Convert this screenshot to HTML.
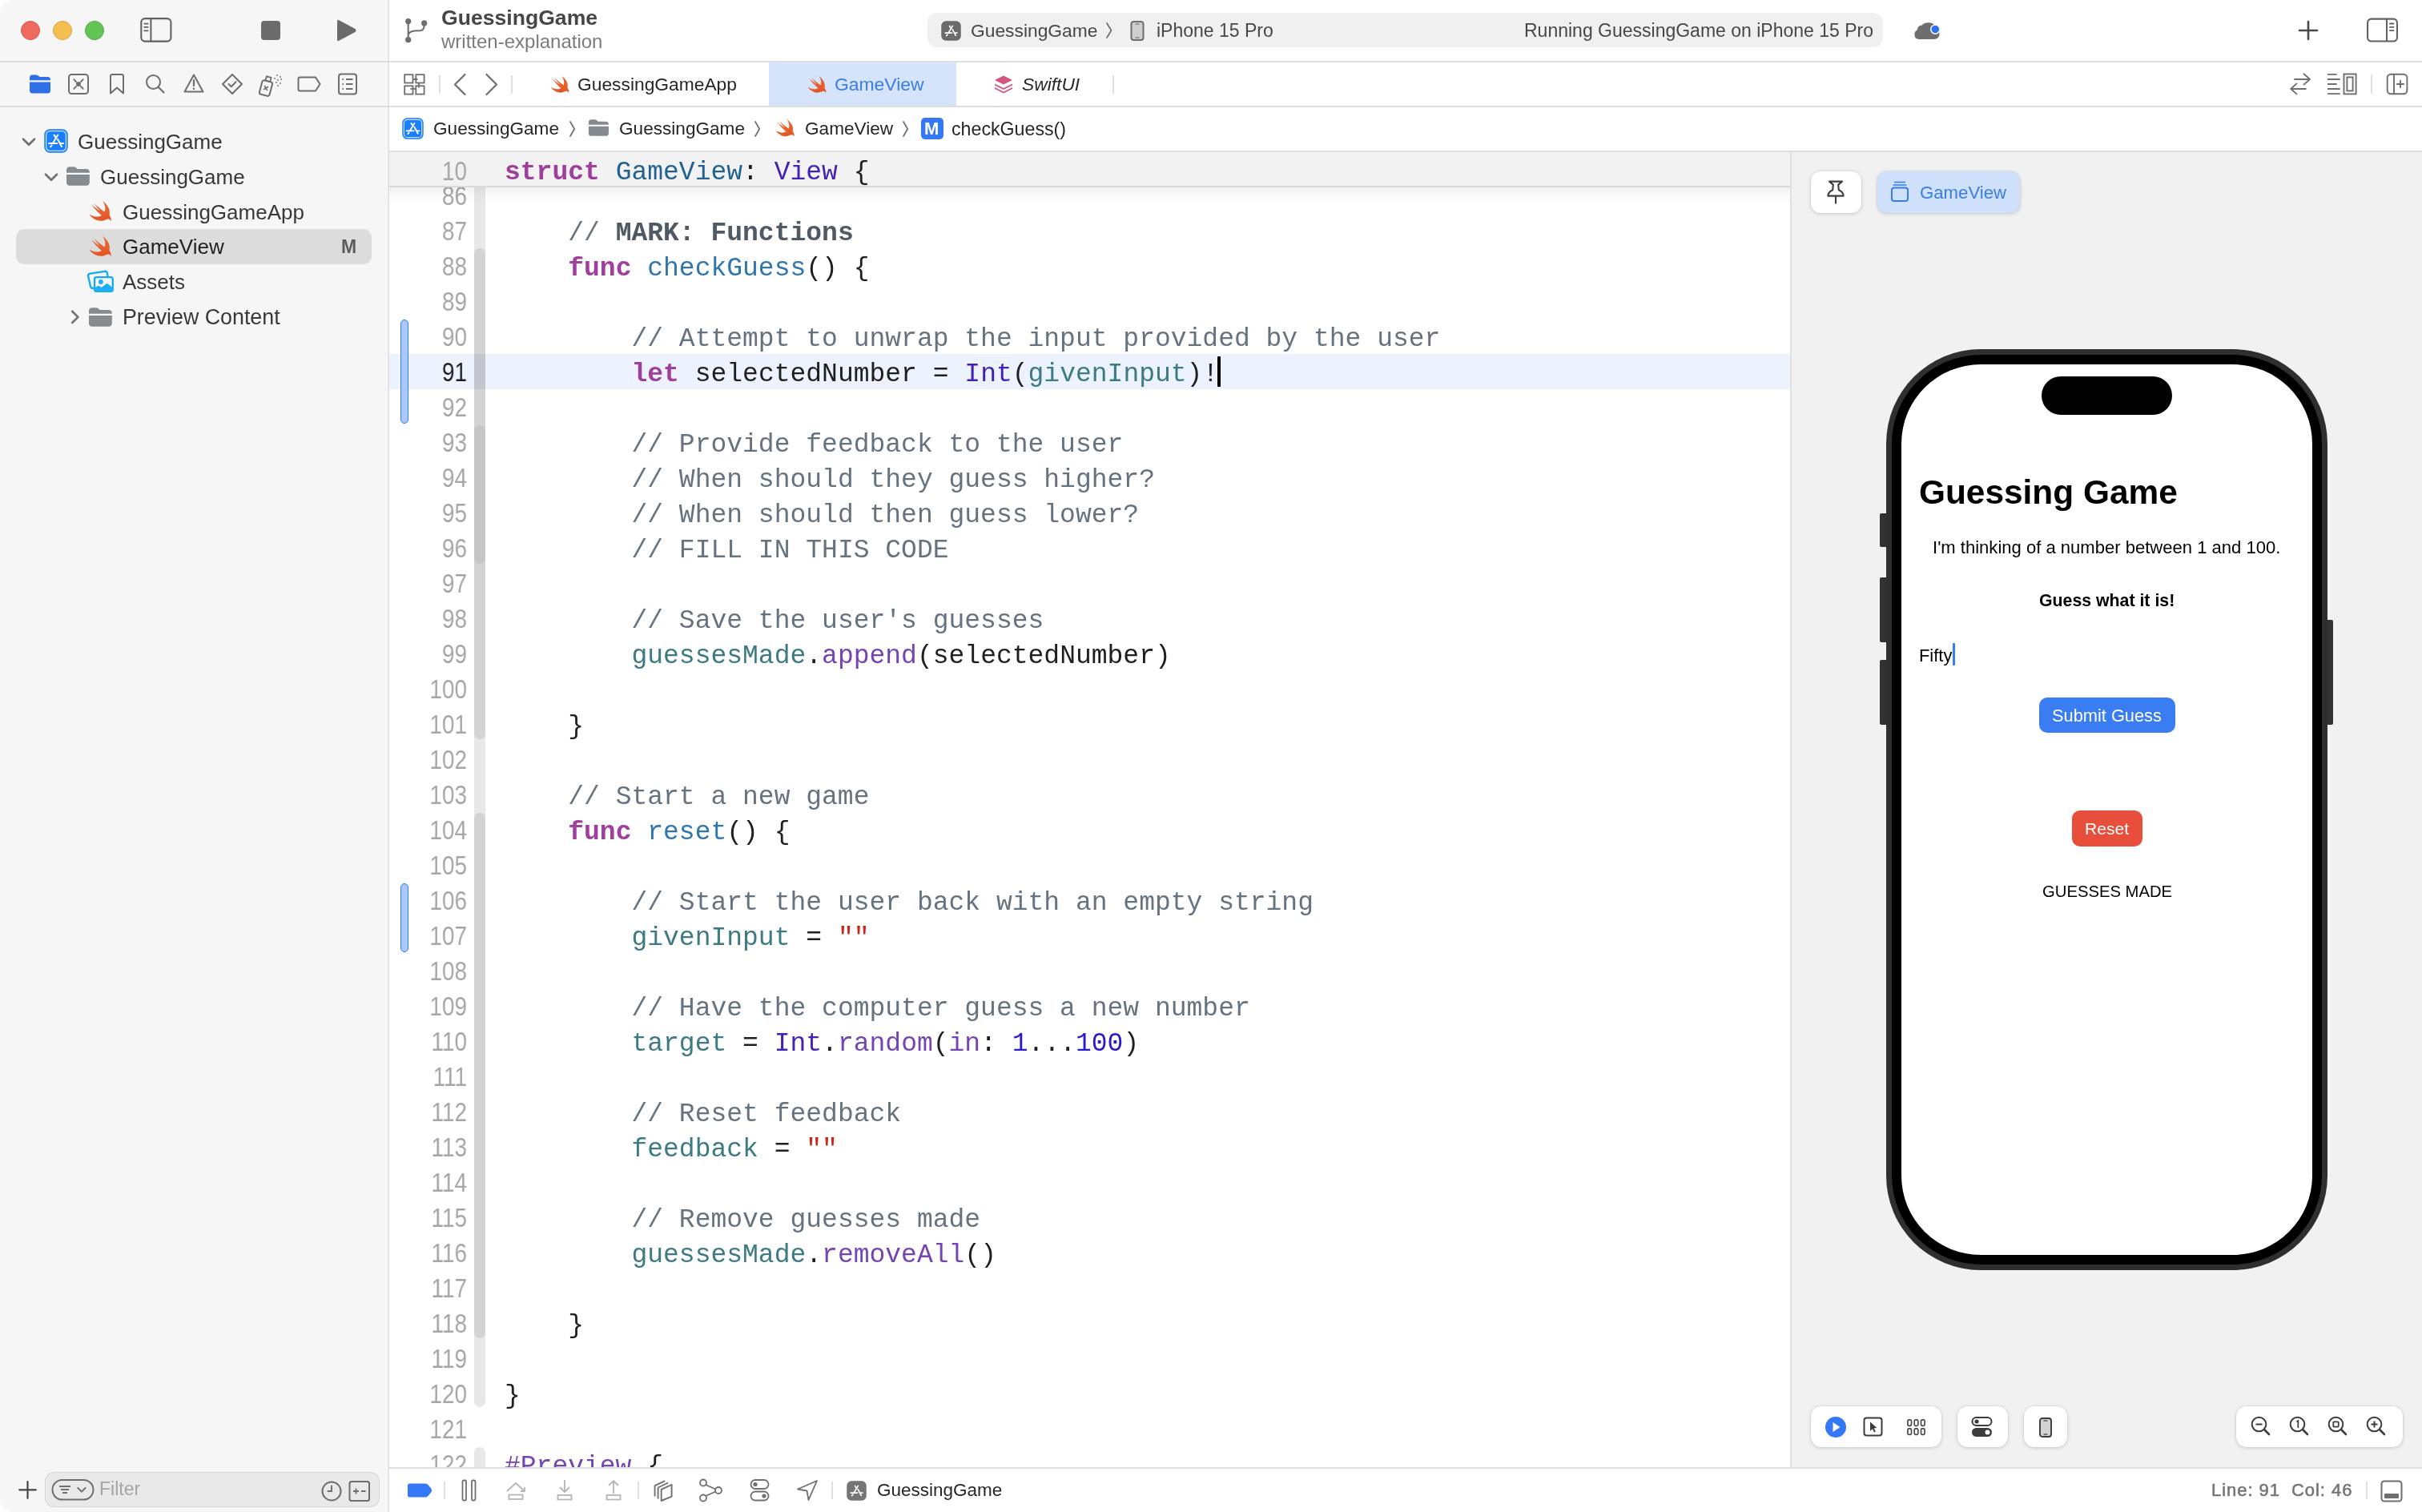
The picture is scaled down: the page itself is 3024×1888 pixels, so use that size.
<!DOCTYPE html>
<html><head><meta charset="utf-8"><style>
html,body{margin:0;padding:0;width:3024px;height:1888px;overflow:hidden;background:#fff;font-family:"Liberation Sans", sans-serif}
.t{position:absolute;white-space:pre;will-change:transform;}
svg{overflow:visible}
</style></head><body>
<div style="position:absolute;left:0px;top:0px;width:486px;height:1888px;background:#f6f6f6;border-radius:16px 0 0 16px"></div>
<div style="position:absolute;left:485px;top:0px;width:1px;height:1888px;background:#dcdcdc;"></div>
<div style="position:absolute;left:484px;top:0px;width:1px;height:1888px;background:#ededed;"></div>
<div style="position:absolute;left:26px;top:26px;width:22px;height:22px;border-radius:50%;background:#ee6a5f;border:1px solid #d8574d"></div>
<div style="position:absolute;left:66px;top:26px;width:22px;height:22px;border-radius:50%;background:#f5bf4f;border:1px solid #dba43c"></div>
<div style="position:absolute;left:106px;top:26px;width:22px;height:22px;border-radius:50%;background:#61c454;border:1px solid #4fa843"></div>
<svg style="position:absolute;left:173px;top:20px;" width="42" height="34" viewBox="0 0 42 34"><rect x="3.3" y="3.1" width="37.1" height="28.5" rx="4.8" fill="none" stroke="#616161" stroke-width="2.1"/><line x1="15.4" y1="3" x2="15.4" y2="31.6" stroke="#616161" stroke-width="2"/><path d="M7.2 9.6H11.6M7.2 13.9H11.6M7.2 18.3H11.6" stroke="#616161" stroke-width="1.8" stroke-linecap="round"/></svg>
<div style="position:absolute;left:326px;top:26px;width:24px;height:24px;background:#6b6b6b;border-radius:4px"></div>
<svg style="position:absolute;left:417px;top:22px;" width="30" height="32" viewBox="0 0 30 32"><path d="M4 4.5 Q4 2 6.3 3.2 L26.5 14 Q28.5 16 26.5 18 L6.3 28.8 Q4 30 4 27.5 Z" fill="#6b6b6b"/></svg>
<div style="position:absolute;left:0px;top:76px;width:486px;height:2px;background:#dcdcdc;"></div>
<div style="position:absolute;left:0px;top:132px;width:486px;height:2px;background:#dcdcdc;"></div>
<svg style="position:absolute;left:35px;top:92px;" width="30" height="26" viewBox="0 0 30 26"><path d="M2 5 Q2 1.5 5.5 1.5 H10 Q12 1.5 13.5 3 L14.5 4 H24.5 Q28 4 28 7.5 V8.2 H2 Z" fill="#2f6fe8"/><path d="M2 10.5 H28 V21 Q28 24.5 24.5 24.5 H5.5 Q2 24.5 2 21 Z" fill="#2f6fe8"/></svg>
<svg style="position:absolute;left:83px;top:90px;" width="30" height="30" viewBox="0 0 30 30"><rect x="3" y="3" width="24" height="24" rx="3.5" fill="none" stroke="#6e6e6e" stroke-width="2"/><circle cx="15" cy="15" r="3" fill="#6e6e6e"/><path d="M9.2 9.2 L12 12 M20.8 9.2 L18 12 M9.2 20.8 L12 18 M20.8 20.8 L18 18" stroke="#6e6e6e" stroke-width="1.8" stroke-linecap="round"/></svg>
<svg style="position:absolute;left:134px;top:90px;" width="24" height="30" viewBox="0 0 24 30"><path d="M4 26.5 V5 Q4 3 6 3 H18 Q20 3 20 5 V26.5 L12 19.5 Z" fill="none" stroke="#6e6e6e" stroke-width="2" stroke-linejoin="round"/></svg>
<svg style="position:absolute;left:180px;top:91px;" width="28" height="28" viewBox="0 0 28 28"><circle cx="11.5" cy="11.5" r="8.5" fill="none" stroke="#6e6e6e" stroke-width="2"/><line x1="17.8" y1="17.8" x2="24.5" y2="24.5" stroke="#6e6e6e" stroke-width="2.2" stroke-linecap="round"/></svg>
<svg style="position:absolute;left:228px;top:90px;" width="28" height="28" viewBox="0 0 28 28"><path d="M14 3.5 L25.5 24.5 H2.5 Z" fill="none" stroke="#6e6e6e" stroke-width="2" stroke-linejoin="round"/><line x1="14" y1="10" x2="14" y2="17" stroke="#6e6e6e" stroke-width="2.2" stroke-linecap="round"/><circle cx="14" cy="20.8" r="1.3" fill="#6e6e6e"/></svg>
<svg style="position:absolute;left:275px;top:90px;" width="30" height="30" viewBox="0 0 30 30"><path d="M15 3 L27 15 L15 27 L3 15 Z" fill="none" stroke="#6e6e6e" stroke-width="2" stroke-linejoin="round"/><path d="M10.5 15 L13.8 18.2 L19.5 12.3" fill="none" stroke="#6e6e6e" stroke-width="2" stroke-linecap="round" stroke-linejoin="round"/></svg>
<svg style="position:absolute;left:321px;top:90px;" width="36" height="32" viewBox="0 0 36 32"><g transform="rotate(15 11 18)"><rect x="5" y="11" width="13" height="18" rx="2.5" fill="none" stroke="#6e6e6e" stroke-width="2"/><rect x="8.5" y="5.5" width="6" height="5.5" fill="none" stroke="#6e6e6e" stroke-width="1.8"/><path d="M9 17.5 L14 22.5 M14 17.5 L9 22.5" stroke="#6e6e6e" stroke-width="1.6"/></g><g fill="#6e6e6e"><circle cx="25" cy="4" r="0.9"/><circle cx="29" cy="6" r="0.9"/><circle cx="22" cy="8" r="0.9"/><circle cx="26" cy="10" r="0.9"/><circle cx="30" cy="9" r="0.9"/><circle cx="24" cy="13" r="0.9"/><circle cx="29" cy="14" r="0.9"/><circle cx="26" cy="17" r="0.9"/></g></svg>
<svg style="position:absolute;left:369px;top:94px;" width="34" height="22" viewBox="0 0 34 22"><path d="M3.5 4.5 Q3.5 2.5 5.5 2.5 H25 L30.5 11 L25 19.5 H5.5 Q3.5 19.5 3.5 17.5 Z" fill="none" stroke="#6e6e6e" stroke-width="2" stroke-linejoin="round"/></svg>
<svg style="position:absolute;left:421px;top:90px;" width="26" height="30" viewBox="0 0 26 30"><rect x="2" y="2.5" width="22" height="25" rx="3" fill="none" stroke="#6e6e6e" stroke-width="2"/><path d="M6.5 9H8M11 9H19.5M6.5 15H8M11 15H19.5M6.5 21H8M11 21H19.5" stroke="#6e6e6e" stroke-width="1.8"/></svg>
<svg style="position:absolute;left:26px;top:169.5px;" width="20" height="16" viewBox="0 0 20 16"><path d="M3 3.8 L10 10.8 L17 3.8" fill="none" stroke="#737373" stroke-width="2.8" stroke-linecap="round" stroke-linejoin="round"/></svg>
<svg style="position:absolute;left:54.6px;top:161px;" width="30" height="30" viewBox="0 0 30 30"><rect x="0.3" y="0.3" width="29.4" height="29.4" rx="7" fill="#1b7ffb"/><rect x="2.6" y="2.6" width="24.8" height="24.8" rx="5" fill="none" stroke="#ffffff" stroke-opacity="0.75" stroke-width="1.3"/><path d="M12.6 7.6 L14.6 10.8 M17.2 7.6 L10.9 18.1 M16.9 12.8 L22 22 M6.2 18.1 H16.2 M20.5 18.1 H24 M9.5 20.6 L8 22.3" stroke="#ffffff" stroke-width="2" stroke-linecap="round" fill="none"/></svg>
<div class="t" style="left:97.0px;top:163.9px;font:normal 400 26px/1 'Liberation Sans', sans-serif;color:#383838;">GuessingGame</div>
<svg style="position:absolute;left:54px;top:213.5px;" width="20" height="16" viewBox="0 0 20 16"><path d="M3 3.8 L10 10.8 L17 3.8" fill="none" stroke="#737373" stroke-width="2.8" stroke-linecap="round" stroke-linejoin="round"/></svg>
<svg style="position:absolute;left:82px;top:208px;" width="31" height="25" viewBox="0 0 31 25"><path d="M1 4.6 Q1 0.3 5.3 0.3 H9.6 Q11.6 0.3 13.1 1.6 L14.6 3 H25.6 Q29.8 3 29.8 7.2 V7.7 H1 Z" fill="#868b90"/><path d="M1 10 H29.8 V19.6 Q29.8 23.8 25.6 23.8 H5.2 Q1 23.8 1 19.6 Z" fill="#868b90"/></svg>
<div class="t" style="left:125.0px;top:207.9px;font:normal 400 26px/1 'Liberation Sans', sans-serif;color:#383838;">GuessingGame</div>
<svg style="position:absolute;left:109px;top:251px;" width="30" height="26" viewBox="0.9 3.3 19.8 16.9"><defs><linearGradient id="sg" x1="0" y1="0" x2="0" y2="1"><stop offset="0" stop-color="#eb6a36"/><stop offset="1" stop-color="#e35626"/></linearGradient></defs><path d="M13.543 3.41c4.114 2.47 6.545 7.162 5.549 11.131-.024.093-.05.181-.076.272l.002.001c2.062 2.538 1.5 5.258 1.236 4.745-1.072-2.086-3.066-1.568-4.088-1.043a6.803 6.803 0 0 1-.281.158l-.02.012-.002.002c-2.115 1.123-4.957 1.205-7.812-.022a12.568 12.568 0 0 1-5.64-4.838c.649.48 1.35.902 2.097 1.252 3.019 1.414 6.051 1.311 8.197-.002C9.651 12.73 7.101 9.67 5.146 7.191a10.628 10.628 0 0 1-1.005-1.384c2.34 2.142 6.038 4.83 7.365 5.576C8.69 8.408 6.208 4.743 6.324 4.86c4.436 4.47 8.528 6.996 8.528 6.996.154.085.27.154.36.213.085-.215.16-.437.224-.668.708-2.588-.09-5.548-1.893-7.992z" fill="url(#sg)"/></svg>
<div class="t" style="left:153.0px;top:251.9px;font:normal 400 26px/1 'Liberation Sans', sans-serif;color:#383838;">GuessingGameApp</div>
<div style="position:absolute;left:20px;top:286px;width:444px;height:44px;background:#dcdcdc;border-radius:10px"></div>
<svg style="position:absolute;left:109px;top:295px;" width="30" height="26" viewBox="0.9 3.3 19.8 16.9"><defs><linearGradient id="sg" x1="0" y1="0" x2="0" y2="1"><stop offset="0" stop-color="#eb6a36"/><stop offset="1" stop-color="#e35626"/></linearGradient></defs><path d="M13.543 3.41c4.114 2.47 6.545 7.162 5.549 11.131-.024.093-.05.181-.076.272l.002.001c2.062 2.538 1.5 5.258 1.236 4.745-1.072-2.086-3.066-1.568-4.088-1.043a6.803 6.803 0 0 1-.281.158l-.02.012-.002.002c-2.115 1.123-4.957 1.205-7.812-.022a12.568 12.568 0 0 1-5.64-4.838c.649.48 1.35.902 2.097 1.252 3.019 1.414 6.051 1.311 8.197-.002C9.651 12.73 7.101 9.67 5.146 7.191a10.628 10.628 0 0 1-1.005-1.384c2.34 2.142 6.038 4.83 7.365 5.576C8.69 8.408 6.208 4.743 6.324 4.86c4.436 4.47 8.528 6.996 8.528 6.996.154.085.27.154.36.213.085-.215.16-.437.224-.668.708-2.588-.09-5.548-1.893-7.992z" fill="url(#sg)"/></svg>
<div class="t" style="left:153.0px;top:295.4px;font:normal 400 26px/1 'Liberation Sans', sans-serif;color:#1f1f1f;">GameView</div>
<div class="t" style="left:425.5px;top:297.1px;font:normal 700 23px/1 'Liberation Sans', sans-serif;color:#5c5c5c;">M</div>
<svg style="position:absolute;left:108px;top:337px;" width="36" height="30" viewBox="0 0 36 30"><path d="M8.5 23 Q5.3 23 4.9 20.3 L2.1 7.8 Q1.7 5.1 4.5 4.6 L22.8 1.8 Q25.6 1.4 26 4.2 L26.5 8" fill="none" stroke="#12a9f5" stroke-width="2.3" stroke-linecap="round"/><rect x="10.05" y="9.15" width="22.7" height="17.6" rx="2.6" fill="none" stroke="#12a9f5" stroke-width="2.3"/><circle cx="17.9" cy="15" r="2.9" fill="#1eaff6"/><path d="M9.6 22.6 L14.6 19.9 Q15.3 19.5 15.9 19.9 L18.6 21.9 L25.1 17.1 Q25.8 16.7 26.5 17.2 L33.2 22.6 V26.5 Q33.2 27.6 31.8 27.6 H11 Q9.6 27.6 9.6 26.2 Z" fill="#1eaff6"/></svg>
<div class="t" style="left:153.0px;top:338.9px;font:normal 400 26px/1 'Liberation Sans', sans-serif;color:#383838;">Assets</div>
<svg style="position:absolute;left:86px;top:386px;" width="16" height="22" viewBox="0 0 16 22"><path d="M4.2 2.8 L11.4 9.9 L4.2 17" fill="none" stroke="#737373" stroke-width="2.7" stroke-linecap="round" stroke-linejoin="round"/></svg>
<svg style="position:absolute;left:110px;top:384px;" width="31" height="25" viewBox="0 0 31 25"><path d="M1 4.6 Q1 0.3 5.3 0.3 H9.6 Q11.6 0.3 13.1 1.6 L14.6 3 H25.6 Q29.8 3 29.8 7.2 V7.7 H1 Z" fill="#868b90"/><path d="M1 10 H29.8 V19.6 Q29.8 23.8 25.6 23.8 H5.2 Q1 23.8 1 19.6 Z" fill="#868b90"/></svg>
<div class="t" style="left:153.0px;top:383.0px;font:normal 400 26.8px/1 'Liberation Sans', sans-serif;color:#383838;">Preview Content</div>
<svg style="position:absolute;left:22px;top:1848px;" width="26" height="26" viewBox="0 0 26 26"><path d="M12.5 2V22.8M2.2 12.3H22.8" stroke="#444" stroke-width="2.2" stroke-linecap="round"/></svg>
<div style="position:absolute;left:56px;top:1838px;width:418px;height:44px;background:#e9e9e9;border-radius:12px;box-shadow:inset 0 0 0 1px #d6d6d6"></div>
<svg style="position:absolute;left:63px;top:1846px;" width="56" height="30" viewBox="0 0 56 30"><rect x="2.5" y="2" width="51" height="24.5" rx="12.2" fill="none" stroke="#6e6e6e" stroke-width="2"/><path d="M11 10H25M13 14H23M15 18H21" stroke="#6e6e6e" stroke-width="1.9"/><path d="M34.3 12 L38.9 16.6 L43.6 12" fill="none" stroke="#6e6e6e" stroke-width="2" stroke-linecap="round" stroke-linejoin="round"/></svg>
<div class="t" style="left:124.0px;top:1848.0px;font:normal 400 23px/1 'Liberation Sans', sans-serif;color:#a5a5a5;">Filter</div>
<svg style="position:absolute;left:399px;top:1847px;" width="32" height="30" viewBox="0 0 32 30"><circle cx="15" cy="15" r="11.5" fill="none" stroke="#6e6e6e" stroke-width="2"/><path d="M15 8.5V15H10.5" fill="none" stroke="#6e6e6e" stroke-width="2" stroke-linecap="round"/></svg>
<svg style="position:absolute;left:434px;top:1847px;" width="30" height="30" viewBox="0 0 30 30"><rect x="2.5" y="3" width="24.5" height="24" rx="2.5" fill="none" stroke="#6e6e6e" stroke-width="2"/><path d="M7 15H14M10.5 11.5V18.5M17 15H22.5" stroke="#6e6e6e" stroke-width="1.8"/></svg>
<div style="position:absolute;left:486px;top:0px;width:2538px;height:76px;background:#ffffff;"></div>
<svg style="position:absolute;left:495px;top:15px;" width="50" height="50" viewBox="0 0 50 50"><circle cx="14.7" cy="11.6" r="3.6" fill="#6e6e6e"/><circle cx="14.7" cy="34.7" r="3.6" fill="#6e6e6e"/><circle cx="34.7" cy="13.9" r="3.6" fill="#6e6e6e"/><path d="M14.7 11.6 V34.7 M14.7 29 Q15.5 24 23 23.5 L30 23.2 Q34.5 23 34.7 16" fill="none" stroke="#6e6e6e" stroke-width="2.1"/></svg>
<div class="t" style="left:551.0px;top:9.4px;font:normal 700 26.6px/1 'Liberation Sans', sans-serif;color:#464646;">GuessingGame</div>
<div class="t" style="left:551.0px;top:39.6px;font:normal 400 24px/1 'Liberation Sans', sans-serif;color:#7b7b7b;">written-explanation</div>
<div style="position:absolute;left:1158px;top:16px;width:1193px;height:43px;background:#f0f0f0;border-radius:12px"></div>
<svg style="position:absolute;left:1175px;top:26px;" width="25" height="25" viewBox="0 0 30 30"><rect x="0.3" y="0.3" width="29.4" height="29.4" rx="7" fill="#6b6b6b"/><path d="M12.6 7.6 L14.6 10.8 M17.2 7.6 L10.9 18.1 M16.9 12.8 L22 22 M6.2 18.1 H16.2 M20.5 18.1 H24 M9.5 20.6 L8 22.3" stroke="#ffffff" stroke-width="2" stroke-linecap="round" fill="none"/></svg>
<div class="t" style="left:1212.0px;top:26.8px;font:normal 400 22.8px/1 'Liberation Sans', sans-serif;color:#474747;">GuessingGame</div>
<svg style="position:absolute;left:1379px;top:27px;" width="14" height="22" viewBox="0 0 14 22"><path d="M3 2 L8.5 11 L3 20" fill="none" stroke="#6e6e6e" stroke-width="1.7" stroke-linecap="round" stroke-linejoin="round"/></svg>
<svg style="position:absolute;left:1410px;top:25px;" width="20" height="27" viewBox="0 0 20 27"><rect x="2.5" y="2" width="15" height="23" rx="3" fill="#cfcfcf" stroke="#6e6e6e" stroke-width="2"/><line x1="7.5" y1="5" x2="12.5" y2="5" stroke="#6e6e6e" stroke-width="1.2"/><line x1="7.5" y1="22" x2="12.5" y2="22" stroke="#6e6e6e" stroke-width="1.2"/></svg>
<div class="t" style="left:1444.0px;top:26.7px;font:normal 400 23px/1 'Liberation Sans', sans-serif;color:#474747;">iPhone 15 Pro</div>
<div class="t" style="left:1902.5px;top:26.7px;font:normal 400 23px/1 'Liberation Sans', sans-serif;color:#474747;">Running GuessingGame on iPhone 15 Pro</div>
<svg style="position:absolute;left:2388px;top:24px;" width="38" height="30" viewBox="0 0 38 30"><path d="M8 24.9 Q2.4 24.9 2.4 19 Q2.4 14.8 6 13.2 Q6.2 7.6 11.6 7.4 Q14.6 4.2 19.6 4.2 Q25.5 4.2 28.5 8.5 Q33.5 11.5 33.5 18 Q33.5 24.9 26.5 24.9 Z" fill="#6e6e6e"/><circle cx="28.3" cy="12.6" r="6.3" fill="#ffffff"/><circle cx="28.3" cy="12.6" r="4.8" fill="#2f6ff0"/></svg>
<svg style="position:absolute;left:2868px;top:24px;" width="28" height="28" viewBox="0 0 28 28"><path d="M14 3V25M3 14H25" stroke="#4a4a4a" stroke-width="2.6" stroke-linecap="round"/></svg>
<svg style="position:absolute;left:2953px;top:21px;" width="42" height="33" viewBox="0 0 42 33"><rect x="3.05" y="2.65" width="36.9" height="27.9" rx="4.8" fill="none" stroke="#616161" stroke-width="2.1"/><line x1="27" y1="2.6" x2="27" y2="30.6" stroke="#616161" stroke-width="2"/><path d="M30.9 8.5H35.5M30.9 12.9H35.5M30.9 17.2H35.5" stroke="#616161" stroke-width="1.8" stroke-linecap="round"/></svg>
<div style="position:absolute;left:486px;top:76px;width:2538px;height:2px;background:#dedede;"></div>
<div style="position:absolute;left:486px;top:78px;width:2538px;height:54px;background:#ffffff;"></div>
<div style="position:absolute;left:486px;top:132px;width:2538px;height:2px;background:#dedede;"></div>
<svg style="position:absolute;left:498px;top:86px;" width="40" height="40" viewBox="0 0 40 40"><g fill="none" stroke="#6e6e6e" stroke-width="1.8"><rect x="7.2" y="7.2" width="10.3" height="10.3"/><rect x="21.3" y="7.2" width="10.3" height="10.3"/><rect x="7.2" y="21.3" width="10.3" height="10.3"/><rect x="21.3" y="21.3" width="10.3" height="10.3"/><path d="M17.5 13 H23.5 M25 17.5 V23.5 M14.3 24.9 H21.3"/></g></svg>
<div style="position:absolute;left:548px;top:94px;width:2px;height:23px;background:#e0e0e0;"></div>
<svg style="position:absolute;left:562px;top:90px;" width="24" height="32" viewBox="0 0 24 32"><path d="M18.5 3 L6 15.5 L18.5 28" fill="none" stroke="#6e6e6e" stroke-width="2.2" stroke-linecap="round" stroke-linejoin="round"/></svg>
<svg style="position:absolute;left:602px;top:90px;" width="24" height="32" viewBox="0 0 24 32"><path d="M5.5 3 L18 15.5 L5.5 28" fill="none" stroke="#6e6e6e" stroke-width="2.2" stroke-linecap="round" stroke-linejoin="round"/></svg>
<div style="position:absolute;left:638px;top:94px;width:2px;height:23px;background:#e0e0e0;"></div>
<svg style="position:absolute;left:684.5px;top:94.5px;" width="26" height="21.5" viewBox="0.9 3.3 19.8 16.9"><defs><linearGradient id="sg" x1="0" y1="0" x2="0" y2="1"><stop offset="0" stop-color="#eb6a36"/><stop offset="1" stop-color="#e35626"/></linearGradient></defs><path d="M13.543 3.41c4.114 2.47 6.545 7.162 5.549 11.131-.024.093-.05.181-.076.272l.002.001c2.062 2.538 1.5 5.258 1.236 4.745-1.072-2.086-3.066-1.568-4.088-1.043a6.803 6.803 0 0 1-.281.158l-.02.012-.002.002c-2.115 1.123-4.957 1.205-7.812-.022a12.568 12.568 0 0 1-5.64-4.838c.649.48 1.35.902 2.097 1.252 3.019 1.414 6.051 1.311 8.197-.002C9.651 12.73 7.101 9.67 5.146 7.191a10.628 10.628 0 0 1-1.005-1.384c2.34 2.142 6.038 4.83 7.365 5.576C8.69 8.408 6.208 4.743 6.324 4.86c4.436 4.47 8.528 6.996 8.528 6.996.154.085.27.154.36.213.085-.215.16-.437.224-.668.708-2.588-.09-5.548-1.893-7.992z" fill="url(#sg)"/></svg>
<div class="t" style="left:721.0px;top:93.8px;font:normal 400 22.8px/1 'Liberation Sans', sans-serif;color:#262626;">GuessingGameApp</div>
<div style="position:absolute;left:960px;top:78px;width:234px;height:54px;background:#d5e4fb;"></div>
<svg style="position:absolute;left:1006px;top:94.5px;" width="26" height="21.5" viewBox="0.9 3.3 19.8 16.9"><defs><linearGradient id="sg" x1="0" y1="0" x2="0" y2="1"><stop offset="0" stop-color="#eb6a36"/><stop offset="1" stop-color="#e35626"/></linearGradient></defs><path d="M13.543 3.41c4.114 2.47 6.545 7.162 5.549 11.131-.024.093-.05.181-.076.272l.002.001c2.062 2.538 1.5 5.258 1.236 4.745-1.072-2.086-3.066-1.568-4.088-1.043a6.803 6.803 0 0 1-.281.158l-.02.012-.002.002c-2.115 1.123-4.957 1.205-7.812-.022a12.568 12.568 0 0 1-5.64-4.838c.649.48 1.35.902 2.097 1.252 3.019 1.414 6.051 1.311 8.197-.002C9.651 12.73 7.101 9.67 5.146 7.191a10.628 10.628 0 0 1-1.005-1.384c2.34 2.142 6.038 4.83 7.365 5.576C8.69 8.408 6.208 4.743 6.324 4.86c4.436 4.47 8.528 6.996 8.528 6.996.154.085.27.154.36.213.085-.215.16-.437.224-.668.708-2.588-.09-5.548-1.893-7.992z" fill="url(#sg)"/></svg>
<div class="t" style="left:1042.0px;top:93.7px;font:normal 400 22.9px/1 'Liberation Sans', sans-serif;color:#3a7de6;">GameView</div>
<svg style="position:absolute;left:1239px;top:92px;" width="28" height="26" viewBox="0 0 28 26"><path d="M14 2.5 L25 8 L14 13.5 L3 8 Z" fill="#d4557f"/><path d="M3 12.5 L14 18 L25 12.5 V14.5 L14 20 L3 14.5 Z" fill="#d4557f"/><path d="M3 17 L14 22.5 L25 17 V19 L14 24.5 L3 19 Z" fill="#d4557f"/></svg>
<div class="t" style="left:1276.0px;top:93.8px;font:italic 400 22.8px/1 'Liberation Sans', sans-serif;color:#262626;">SwiftUI</div>
<div style="position:absolute;left:1389px;top:94px;width:2px;height:23px;background:#e0e0e0;"></div>
<svg style="position:absolute;left:2850px;top:85px;" width="170" height="40" viewBox="0 0 170 40"><g fill="none" stroke="#6e6e6e" stroke-width="1.9" stroke-linecap="round" stroke-linejoin="round"><path d="M15 14 H34 M26.5 7.2 L34 14 L26.5 20.6 M28.8 26 H10.2 M17.5 19.4 L10.2 26 L17.5 32.4"/></g><g stroke="#6e6e6e" stroke-width="1.9"><path d="M56 7.9H67.7M56 14H71.7M56 20H67.7M56 26H71.7M56 32.1H71.7"/><rect x="76.5" y="7.5" width="15.1" height="24.9" fill="none"/><rect x="80.4" y="11.4" width="7.2" height="17" fill="none"/></g></svg>
<div style="position:absolute;left:2960px;top:93px;width:2px;height:24px;background:#e0e0e0;"></div>
<svg style="position:absolute;left:2978px;top:90px;" width="30" height="30" viewBox="0 0 30 30"><rect x="2.7" y="2.7" width="24.7" height="24.6" rx="4.5" fill="none" stroke="#6e6e6e" stroke-width="1.9"/><line x1="11" y1="3" x2="11" y2="27" stroke="#6e6e6e" stroke-width="1.9"/><path d="M19 10.2V19.8M14.2 15H23.8" stroke="#6e6e6e" stroke-width="1.9"/></svg>
<div style="position:absolute;left:486px;top:134px;width:2538px;height:54px;background:#ffffff;"></div>
<div style="position:absolute;left:486px;top:188px;width:2538px;height:2px;background:#dedede;"></div>
<svg style="position:absolute;left:502px;top:147px;" width="27" height="27" viewBox="0 0 30 30"><rect x="0.3" y="0.3" width="29.4" height="29.4" rx="7" fill="#1b7ffb"/><rect x="2.6" y="2.6" width="24.8" height="24.8" rx="5" fill="none" stroke="#ffffff" stroke-opacity="0.75" stroke-width="1.3"/><path d="M12.6 7.6 L14.6 10.8 M17.2 7.6 L10.9 18.1 M16.9 12.8 L22 22 M6.2 18.1 H16.2 M20.5 18.1 H24 M9.5 20.6 L8 22.3" stroke="#ffffff" stroke-width="2" stroke-linecap="round" fill="none"/></svg>
<div class="t" style="left:541.0px;top:150.4px;font:normal 400 22.6px/1 'Liberation Sans', sans-serif;color:#262626;">GuessingGame</div>
<svg style="position:absolute;left:709px;top:150px;" width="12" height="22" viewBox="0 0 12 22"><path d="M3 2 L8.2 11 L3 20" fill="none" stroke="#6e6e6e" stroke-width="1.7" stroke-linecap="round" stroke-linejoin="round"/></svg>
<svg style="position:absolute;left:940px;top:150px;" width="12" height="22" viewBox="0 0 12 22"><path d="M3 2 L8.2 11 L3 20" fill="none" stroke="#6e6e6e" stroke-width="1.7" stroke-linecap="round" stroke-linejoin="round"/></svg>
<svg style="position:absolute;left:1125px;top:150px;" width="12" height="22" viewBox="0 0 12 22"><path d="M3 2 L8.2 11 L3 20" fill="none" stroke="#6e6e6e" stroke-width="1.7" stroke-linecap="round" stroke-linejoin="round"/></svg>
<svg style="position:absolute;left:734px;top:149px;" width="27" height="22" viewBox="0 0 31 25"><path d="M1 4.6 Q1 0.3 5.3 0.3 H9.6 Q11.6 0.3 13.1 1.6 L14.6 3 H25.6 Q29.8 3 29.8 7.2 V7.7 H1 Z" fill="#868b90"/><path d="M1 10 H29.8 V19.6 Q29.8 23.8 25.6 23.8 H5.2 Q1 23.8 1 19.6 Z" fill="#868b90"/></svg>
<div class="t" style="left:773.0px;top:150.4px;font:normal 400 22.6px/1 'Liberation Sans', sans-serif;color:#262626;">GuessingGame</div>
<svg style="position:absolute;left:966px;top:149px;" width="26" height="22" viewBox="0.9 3.3 19.8 16.9"><defs><linearGradient id="sg" x1="0" y1="0" x2="0" y2="1"><stop offset="0" stop-color="#eb6a36"/><stop offset="1" stop-color="#e35626"/></linearGradient></defs><path d="M13.543 3.41c4.114 2.47 6.545 7.162 5.549 11.131-.024.093-.05.181-.076.272l.002.001c2.062 2.538 1.5 5.258 1.236 4.745-1.072-2.086-3.066-1.568-4.088-1.043a6.803 6.803 0 0 1-.281.158l-.02.012-.002.002c-2.115 1.123-4.957 1.205-7.812-.022a12.568 12.568 0 0 1-5.64-4.838c.649.48 1.35.902 2.097 1.252 3.019 1.414 6.051 1.311 8.197-.002C9.651 12.73 7.101 9.67 5.146 7.191a10.628 10.628 0 0 1-1.005-1.384c2.34 2.142 6.038 4.83 7.365 5.576C8.69 8.408 6.208 4.743 6.324 4.86c4.436 4.47 8.528 6.996 8.528 6.996.154.085.27.154.36.213.085-.215.16-.437.224-.668.708-2.588-.09-5.548-1.893-7.992z" fill="url(#sg)"/></svg>
<div class="t" style="left:1004.5px;top:150.4px;font:normal 400 22.6px/1 'Liberation Sans', sans-serif;color:#262626;">GameView</div>
<div style="position:absolute;left:1150px;top:147px;width:28px;height:27px;background:#3478f6;border-radius:5px"></div>
<div class="t" style="left:1153.5px;top:150.3px;font:normal 700 22px/1 'Liberation Sans', sans-serif;color:#ffffff;">M</div>
<div class="t" style="left:1188.0px;top:149.9px;font:normal 400 23.2px/1 'Liberation Sans', sans-serif;color:#262626;">checkGuess()</div>
<div style="position:absolute;left:486px;top:190px;width:1749px;height:1642px;background:#fff;overflow:hidden">
<div style="position:absolute;left:-486px;top:-190px;width:3024px;height:1888px">
<div style="position:absolute;left:486px;top:442px;width:1749px;height:44px;background:#ecf3fe;"></div>
<div style="position:absolute;left:592px;top:190px;width:14px;height:1567px;background:#e8e8e8;border-radius:0 0 7px 7px"></div>
<div style="position:absolute;left:592px;top:310px;width:14px;height:613px;background:#d3d3d3;border-radius:7px"></div>
<div style="position:absolute;left:592px;top:531px;width:14px;height:173px;background:#c6c6c6;border-radius:7px"></div>
<div style="position:absolute;left:592px;top:1015px;width:14px;height:656px;background:#d3d3d3;border-radius:7px"></div>
<div style="position:absolute;left:592px;top:1807px;width:14px;height:93px;background:#e8e8e8;border-radius:7px"></div>
<div style="position:absolute;left:592px;top:442px;width:14px;height:44px;background:rgba(120,140,170,0.18);"></div>
<div style="position:absolute;left:500px;top:399px;width:10px;height:130px;background:#a9c8fb;border:1.5px solid #3a7cf2;border-radius:5px;box-sizing:border-box"></div>
<div style="position:absolute;left:500px;top:1103px;width:10px;height:86px;background:#a9c8fb;border:1.5px solid #3a7cf2;border-radius:5px;box-sizing:border-box"></div>
<div class="t" style="left:483px;width:100px;text-align:right;top:228.2px;font:400 33.3px/1 'Liberation Sans', sans-serif;color:#a6a6a6;transform:scaleX(0.84);transform-origin:100% 50%">86</div>
<div class="t" style="left:483px;width:100px;text-align:right;top:272.2px;font:400 33.3px/1 'Liberation Sans', sans-serif;color:#a6a6a6;transform:scaleX(0.84);transform-origin:100% 50%">87</div>
<div class="t" style="left:630.0px;top:275.4px;font:400 33.0px/1 'Liberation Mono', monospace;"><span style="color:#1f1f1f">    </span><span style="color:#66737f">// </span><span style="color:#4f5a64;font-weight:700">MARK: Functions</span></div>
<div class="t" style="left:483px;width:100px;text-align:right;top:316.2px;font:400 33.3px/1 'Liberation Sans', sans-serif;color:#a6a6a6;transform:scaleX(0.84);transform-origin:100% 50%">88</div>
<div class="t" style="left:630.0px;top:319.4px;font:400 33.0px/1 'Liberation Mono', monospace;"><span style="color:#1f1f1f">    </span><span style="color:#a03e9e;font-weight:700">func</span><span style="color:#1f1f1f"> </span><span style="color:#2f76ad">checkGuess</span><span style="color:#1f1f1f">() {</span></div>
<div class="t" style="left:483px;width:100px;text-align:right;top:360.2px;font:400 33.3px/1 'Liberation Sans', sans-serif;color:#a6a6a6;transform:scaleX(0.84);transform-origin:100% 50%">89</div>
<div class="t" style="left:483px;width:100px;text-align:right;top:404.2px;font:400 33.3px/1 'Liberation Sans', sans-serif;color:#a6a6a6;transform:scaleX(0.84);transform-origin:100% 50%">90</div>
<div class="t" style="left:630.0px;top:407.4px;font:400 33.0px/1 'Liberation Mono', monospace;"><span style="color:#1f1f1f">        </span><span style="color:#66737f">// Attempt to unwrap the input provided by the user</span></div>
<div class="t" style="left:483px;width:100px;text-align:right;top:448.2px;font:400 33.3px/1 'Liberation Sans', sans-serif;color:#1d1d1d;transform:scaleX(0.84);transform-origin:100% 50%">91</div>
<div class="t" style="left:630.0px;top:451.4px;font:400 33.0px/1 'Liberation Mono', monospace;"><span style="color:#1f1f1f">        </span><span style="color:#a03e9e;font-weight:700">let</span><span style="color:#1f1f1f"> selectedNumber = </span><span style="color:#4520b5">Int</span><span style="color:#1f1f1f">(</span><span style="color:#3d7a82">givenInput</span><span style="color:#1f1f1f">)!</span></div>
<div class="t" style="left:483px;width:100px;text-align:right;top:492.2px;font:400 33.3px/1 'Liberation Sans', sans-serif;color:#a6a6a6;transform:scaleX(0.84);transform-origin:100% 50%">92</div>
<div class="t" style="left:483px;width:100px;text-align:right;top:536.2px;font:400 33.3px/1 'Liberation Sans', sans-serif;color:#a6a6a6;transform:scaleX(0.84);transform-origin:100% 50%">93</div>
<div class="t" style="left:630.0px;top:539.4px;font:400 33.0px/1 'Liberation Mono', monospace;"><span style="color:#1f1f1f">        </span><span style="color:#66737f">// Provide feedback to the user</span></div>
<div class="t" style="left:483px;width:100px;text-align:right;top:580.2px;font:400 33.3px/1 'Liberation Sans', sans-serif;color:#a6a6a6;transform:scaleX(0.84);transform-origin:100% 50%">94</div>
<div class="t" style="left:630.0px;top:583.4px;font:400 33.0px/1 'Liberation Mono', monospace;"><span style="color:#1f1f1f">        </span><span style="color:#66737f">// When should they guess higher?</span></div>
<div class="t" style="left:483px;width:100px;text-align:right;top:624.2px;font:400 33.3px/1 'Liberation Sans', sans-serif;color:#a6a6a6;transform:scaleX(0.84);transform-origin:100% 50%">95</div>
<div class="t" style="left:630.0px;top:627.4px;font:400 33.0px/1 'Liberation Mono', monospace;"><span style="color:#1f1f1f">        </span><span style="color:#66737f">// When should then guess lower?</span></div>
<div class="t" style="left:483px;width:100px;text-align:right;top:668.2px;font:400 33.3px/1 'Liberation Sans', sans-serif;color:#a6a6a6;transform:scaleX(0.84);transform-origin:100% 50%">96</div>
<div class="t" style="left:630.0px;top:671.4px;font:400 33.0px/1 'Liberation Mono', monospace;"><span style="color:#1f1f1f">        </span><span style="color:#66737f">// FILL IN THIS CODE</span></div>
<div class="t" style="left:483px;width:100px;text-align:right;top:712.2px;font:400 33.3px/1 'Liberation Sans', sans-serif;color:#a6a6a6;transform:scaleX(0.84);transform-origin:100% 50%">97</div>
<div class="t" style="left:483px;width:100px;text-align:right;top:756.2px;font:400 33.3px/1 'Liberation Sans', sans-serif;color:#a6a6a6;transform:scaleX(0.84);transform-origin:100% 50%">98</div>
<div class="t" style="left:630.0px;top:759.4px;font:400 33.0px/1 'Liberation Mono', monospace;"><span style="color:#1f1f1f">        </span><span style="color:#66737f">// Save the user&#39;s guesses</span></div>
<div class="t" style="left:483px;width:100px;text-align:right;top:800.2px;font:400 33.3px/1 'Liberation Sans', sans-serif;color:#a6a6a6;transform:scaleX(0.84);transform-origin:100% 50%">99</div>
<div class="t" style="left:630.0px;top:803.4px;font:400 33.0px/1 'Liberation Mono', monospace;"><span style="color:#1f1f1f">        </span><span style="color:#3d7a82">guessesMade</span><span style="color:#1f1f1f">.</span><span style="color:#7444b5">append</span><span style="color:#1f1f1f">(selectedNumber)</span></div>
<div class="t" style="left:483px;width:100px;text-align:right;top:844.2px;font:400 33.3px/1 'Liberation Sans', sans-serif;color:#a6a6a6;transform:scaleX(0.84);transform-origin:100% 50%">100</div>
<div class="t" style="left:483px;width:100px;text-align:right;top:888.2px;font:400 33.3px/1 'Liberation Sans', sans-serif;color:#a6a6a6;transform:scaleX(0.84);transform-origin:100% 50%">101</div>
<div class="t" style="left:630.0px;top:891.4px;font:400 33.0px/1 'Liberation Mono', monospace;"><span style="color:#1f1f1f">    }</span></div>
<div class="t" style="left:483px;width:100px;text-align:right;top:932.2px;font:400 33.3px/1 'Liberation Sans', sans-serif;color:#a6a6a6;transform:scaleX(0.84);transform-origin:100% 50%">102</div>
<div class="t" style="left:483px;width:100px;text-align:right;top:976.2px;font:400 33.3px/1 'Liberation Sans', sans-serif;color:#a6a6a6;transform:scaleX(0.84);transform-origin:100% 50%">103</div>
<div class="t" style="left:630.0px;top:979.4px;font:400 33.0px/1 'Liberation Mono', monospace;"><span style="color:#1f1f1f">    </span><span style="color:#66737f">// Start a new game</span></div>
<div class="t" style="left:483px;width:100px;text-align:right;top:1020.2px;font:400 33.3px/1 'Liberation Sans', sans-serif;color:#a6a6a6;transform:scaleX(0.84);transform-origin:100% 50%">104</div>
<div class="t" style="left:630.0px;top:1023.4px;font:400 33.0px/1 'Liberation Mono', monospace;"><span style="color:#1f1f1f">    </span><span style="color:#a03e9e;font-weight:700">func</span><span style="color:#1f1f1f"> </span><span style="color:#2f76ad">reset</span><span style="color:#1f1f1f">() {</span></div>
<div class="t" style="left:483px;width:100px;text-align:right;top:1064.2px;font:400 33.3px/1 'Liberation Sans', sans-serif;color:#a6a6a6;transform:scaleX(0.84);transform-origin:100% 50%">105</div>
<div class="t" style="left:483px;width:100px;text-align:right;top:1108.2px;font:400 33.3px/1 'Liberation Sans', sans-serif;color:#a6a6a6;transform:scaleX(0.84);transform-origin:100% 50%">106</div>
<div class="t" style="left:630.0px;top:1111.4px;font:400 33.0px/1 'Liberation Mono', monospace;"><span style="color:#1f1f1f">        </span><span style="color:#66737f">// Start the user back with an empty string</span></div>
<div class="t" style="left:483px;width:100px;text-align:right;top:1152.2px;font:400 33.3px/1 'Liberation Sans', sans-serif;color:#a6a6a6;transform:scaleX(0.84);transform-origin:100% 50%">107</div>
<div class="t" style="left:630.0px;top:1155.4px;font:400 33.0px/1 'Liberation Mono', monospace;"><span style="color:#1f1f1f">        </span><span style="color:#3d7a82">givenInput</span><span style="color:#1f1f1f"> = </span><span style="color:#c5281c">&quot;&quot;</span></div>
<div class="t" style="left:483px;width:100px;text-align:right;top:1196.2px;font:400 33.3px/1 'Liberation Sans', sans-serif;color:#a6a6a6;transform:scaleX(0.84);transform-origin:100% 50%">108</div>
<div class="t" style="left:483px;width:100px;text-align:right;top:1240.2px;font:400 33.3px/1 'Liberation Sans', sans-serif;color:#a6a6a6;transform:scaleX(0.84);transform-origin:100% 50%">109</div>
<div class="t" style="left:630.0px;top:1243.4px;font:400 33.0px/1 'Liberation Mono', monospace;"><span style="color:#1f1f1f">        </span><span style="color:#66737f">// Have the computer guess a new number</span></div>
<div class="t" style="left:483px;width:100px;text-align:right;top:1284.2px;font:400 33.3px/1 'Liberation Sans', sans-serif;color:#a6a6a6;transform:scaleX(0.84);transform-origin:100% 50%">110</div>
<div class="t" style="left:630.0px;top:1287.4px;font:400 33.0px/1 'Liberation Mono', monospace;"><span style="color:#1f1f1f">        </span><span style="color:#3d7a82">target</span><span style="color:#1f1f1f"> = </span><span style="color:#4520b5">Int</span><span style="color:#1f1f1f">.</span><span style="color:#7444b5">random</span><span style="color:#1f1f1f">(</span><span style="color:#7444b5">in</span><span style="color:#1f1f1f">: </span><span style="color:#2b19cf">1</span><span style="color:#1f1f1f">...</span><span style="color:#2b19cf">100</span><span style="color:#1f1f1f">)</span></div>
<div class="t" style="left:483px;width:100px;text-align:right;top:1328.2px;font:400 33.3px/1 'Liberation Sans', sans-serif;color:#a6a6a6;transform:scaleX(0.84);transform-origin:100% 50%">111</div>
<div class="t" style="left:483px;width:100px;text-align:right;top:1372.2px;font:400 33.3px/1 'Liberation Sans', sans-serif;color:#a6a6a6;transform:scaleX(0.84);transform-origin:100% 50%">112</div>
<div class="t" style="left:630.0px;top:1375.4px;font:400 33.0px/1 'Liberation Mono', monospace;"><span style="color:#1f1f1f">        </span><span style="color:#66737f">// Reset feedback</span></div>
<div class="t" style="left:483px;width:100px;text-align:right;top:1416.2px;font:400 33.3px/1 'Liberation Sans', sans-serif;color:#a6a6a6;transform:scaleX(0.84);transform-origin:100% 50%">113</div>
<div class="t" style="left:630.0px;top:1419.4px;font:400 33.0px/1 'Liberation Mono', monospace;"><span style="color:#1f1f1f">        </span><span style="color:#3d7a82">feedback</span><span style="color:#1f1f1f"> = </span><span style="color:#c5281c">&quot;&quot;</span></div>
<div class="t" style="left:483px;width:100px;text-align:right;top:1460.2px;font:400 33.3px/1 'Liberation Sans', sans-serif;color:#a6a6a6;transform:scaleX(0.84);transform-origin:100% 50%">114</div>
<div class="t" style="left:483px;width:100px;text-align:right;top:1504.2px;font:400 33.3px/1 'Liberation Sans', sans-serif;color:#a6a6a6;transform:scaleX(0.84);transform-origin:100% 50%">115</div>
<div class="t" style="left:630.0px;top:1507.4px;font:400 33.0px/1 'Liberation Mono', monospace;"><span style="color:#1f1f1f">        </span><span style="color:#66737f">// Remove guesses made</span></div>
<div class="t" style="left:483px;width:100px;text-align:right;top:1548.2px;font:400 33.3px/1 'Liberation Sans', sans-serif;color:#a6a6a6;transform:scaleX(0.84);transform-origin:100% 50%">116</div>
<div class="t" style="left:630.0px;top:1551.4px;font:400 33.0px/1 'Liberation Mono', monospace;"><span style="color:#1f1f1f">        </span><span style="color:#3d7a82">guessesMade</span><span style="color:#1f1f1f">.</span><span style="color:#7444b5">removeAll</span><span style="color:#1f1f1f">()</span></div>
<div class="t" style="left:483px;width:100px;text-align:right;top:1592.2px;font:400 33.3px/1 'Liberation Sans', sans-serif;color:#a6a6a6;transform:scaleX(0.84);transform-origin:100% 50%">117</div>
<div class="t" style="left:483px;width:100px;text-align:right;top:1636.2px;font:400 33.3px/1 'Liberation Sans', sans-serif;color:#a6a6a6;transform:scaleX(0.84);transform-origin:100% 50%">118</div>
<div class="t" style="left:630.0px;top:1639.4px;font:400 33.0px/1 'Liberation Mono', monospace;"><span style="color:#1f1f1f">    }</span></div>
<div class="t" style="left:483px;width:100px;text-align:right;top:1680.2px;font:400 33.3px/1 'Liberation Sans', sans-serif;color:#a6a6a6;transform:scaleX(0.84);transform-origin:100% 50%">119</div>
<div class="t" style="left:483px;width:100px;text-align:right;top:1724.2px;font:400 33.3px/1 'Liberation Sans', sans-serif;color:#a6a6a6;transform:scaleX(0.84);transform-origin:100% 50%">120</div>
<div class="t" style="left:630.0px;top:1727.4px;font:400 33.0px/1 'Liberation Mono', monospace;"><span style="color:#1f1f1f">}</span></div>
<div class="t" style="left:483px;width:100px;text-align:right;top:1768.2px;font:400 33.3px/1 'Liberation Sans', sans-serif;color:#a6a6a6;transform:scaleX(0.84);transform-origin:100% 50%">121</div>
<div class="t" style="left:483px;width:100px;text-align:right;top:1812.2px;font:400 33.3px/1 'Liberation Sans', sans-serif;color:#a6a6a6;transform:scaleX(0.84);transform-origin:100% 50%">122</div>
<div class="t" style="left:630.0px;top:1815.4px;font:400 33.0px/1 'Liberation Mono', monospace;"><span style="color:#7444b5">#Preview</span><span style="color:#1f1f1f"> {</span></div>
<div style="position:absolute;left:1520px;top:445px;width:4px;height:38px;background:#000000;border-radius:1px"></div>
<div style="position:absolute;left:486px;top:234px;width:1749px;height:22px;background:linear-gradient(rgba(0,0,0,0.055),rgba(0,0,0,0.02) 45%,rgba(0,0,0,0))"></div>
<div style="position:absolute;left:486px;top:190px;width:1749px;height:42px;background:#f2f2f2"></div>
<div style="position:absolute;left:486px;top:232px;width:1749px;height:2px;background:#dadada;"></div>
<div class="t" style="left:483px;width:100px;text-align:right;top:196.5px;font:400 33.3px/1 'Liberation Sans', sans-serif;color:#a6a6a6;transform:scaleX(0.84);transform-origin:100% 50%">10</div>
<div class="t" style="left:630.0px;top:199.0px;font:400 33.0px/1 'Liberation Mono', monospace;"><span style="color:#a03e9e;font-weight:700">struct</span><span style="color:#1f1f1f"> </span><span style="color:#23628f">GameView</span><span style="color:#1f1f1f">: </span><span style="color:#4520b5">View</span><span style="color:#1f1f1f"> {</span></div>
</div></div>
<div style="position:absolute;left:2235px;top:190px;width:789px;height:1642px;background:#f1f1f1;"></div>
<div style="position:absolute;left:2235px;top:190px;width:2px;height:1642px;background:#e0e0e0;"></div>
<div style="position:absolute;left:2261px;top:214px;width:63px;height:52px;background:#ffffff;border-radius:12px;box-shadow:0 1px 5px rgba(0,0,0,0.17),0 0 0 0.5px rgba(0,0,0,0.06)"></div>
<svg style="position:absolute;left:2279px;top:225px;" width="28" height="32" viewBox="0 0 28 32"><path d="M5 1.6 H21 L16.2 5.6 L16.8 12.2 Q22.6 14.6 22.6 19.6 H3.4 Q3.4 14.6 9.2 12.2 L9.8 5.6 Z" fill="none" stroke="#3e3e3e" stroke-width="2.1" stroke-linejoin="round"/><path d="M13 19.8 V28.6" stroke="#3e3e3e" stroke-width="2.1" stroke-linecap="round"/></svg>
<div style="position:absolute;left:2344px;top:214px;width:178px;height:52px;background:#cfe0fb;border-radius:12px;box-shadow:0 1px 5px rgba(0,0,0,0.17),0 0 0 0.5px rgba(0,0,0,0.06)"></div>
<svg style="position:absolute;left:2359px;top:224px;" width="28" height="30" viewBox="0 0 28 30"><path d="M6 3.5H20M4.5 7H21.5" stroke="#3a7de6" stroke-width="1.6"/><rect x="3" y="10.5" width="20" height="16.5" rx="3" fill="none" stroke="#3a7de6" stroke-width="2"/></svg>
<div class="t" style="left:2396.5px;top:229.5px;font:normal 400 22.2px/1 'Liberation Sans', sans-serif;color:#3a7de6;">GameView</div>
<div style="position:absolute;left:2347px;top:641px;width:9px;height:42px;background:#323232;border-radius:2px 0 0 2px"></div>
<div style="position:absolute;left:2347px;top:721px;width:9px;height:81px;background:#323232;border-radius:2px 0 0 2px"></div>
<div style="position:absolute;left:2347px;top:824px;width:9px;height:81px;background:#323232;border-radius:2px 0 0 2px"></div>
<div style="position:absolute;left:2905px;top:774px;width:8px;height:131px;background:#323232;border-radius:0 2px 2px 0"></div>
<div style="position:absolute;left:2355px;top:436px;width:551px;height:1150px;background:#2f2f2f;border-radius:118px"></div>
<div style="position:absolute;left:2362px;top:443px;width:537px;height:1136px;background:#000000;border-radius:111px"></div>
<div style="position:absolute;left:2374px;top:454.5px;width:513px;height:1112.5px;background:#ffffff;border-radius:99px"></div>
<div style="position:absolute;left:2549px;top:469.5px;width:163px;height:48.0px;background:#000000;border-radius:24px"></div>
<div class="t" style="left:2396.0px;top:594.0px;font:normal 700 42.4px/1 'Liberation Sans', sans-serif;color:#000000;">Guessing Game</div>
<div class="t" style="left:2412.5px;top:673.3px;font:normal 400 22.05px/1 'Liberation Sans', sans-serif;color:#000000;">I&#39;m thinking of a number between 1 and 100.</div>
<div class="t" style="left:2546.0px;top:739.9px;font:normal 700 21.3px/1 'Liberation Sans', sans-serif;color:#000000;">Guess what it is!</div>
<div class="t" style="left:2395.5px;top:807.7px;font:normal 400 21.9px/1 'Liberation Sans', sans-serif;color:#000000;">Fifty</div>
<div style="position:absolute;left:2438px;top:803px;width:3px;height:28px;background:#3a7cf2;border-radius:1px"></div>
<div style="position:absolute;left:2545.5px;top:870.5px;width:170.0px;height:44.5px;background:#3a7cf2;border-radius:10px"></div>
<div class="t" style="left:2562.0px;top:882.5px;font:normal 400 21.8px/1 'Liberation Sans', sans-serif;color:#ffffff;">Submit Guess</div>
<div style="position:absolute;left:2586.5px;top:1012px;width:88.0px;height:44.5px;background:#e84e3c;border-radius:10px"></div>
<div class="t" style="left:2603.0px;top:1024.1px;font:normal 400 21.05px/1 'Liberation Sans', sans-serif;color:#ffffff;">Reset</div>
<div class="t" style="left:2549.5px;top:1103.3px;font:normal 400 20.25px/1 'Liberation Sans', sans-serif;color:#000000;">GUESSES MADE</div>
<div style="position:absolute;left:2261px;top:1756px;width:163px;height:51px;background:#ffffff;border-radius:13px;box-shadow:0 1px 5px rgba(0,0,0,0.17),0 0 0 0.5px rgba(0,0,0,0.06)"></div>
<div style="position:absolute;left:2444px;top:1756px;width:63px;height:51px;background:#ffffff;border-radius:13px;box-shadow:0 1px 5px rgba(0,0,0,0.17),0 0 0 0.5px rgba(0,0,0,0.06)"></div>
<div style="position:absolute;left:2527px;top:1756px;width:54px;height:51px;background:#ffffff;border-radius:13px;box-shadow:0 1px 5px rgba(0,0,0,0.17),0 0 0 0.5px rgba(0,0,0,0.06)"></div>
<div style="position:absolute;left:2792px;top:1756px;width:208px;height:51px;background:#ffffff;border-radius:13px;box-shadow:0 1px 5px rgba(0,0,0,0.17),0 0 0 0.5px rgba(0,0,0,0.06)"></div>
<svg style="position:absolute;left:2278px;top:1768px;" width="28" height="28" viewBox="0 0 28 28"><circle cx="14" cy="14" r="13" fill="#3478f6"/><path d="M10.5 8 L19.5 14 L10.5 20 Z" fill="#fff"/></svg>
<svg style="position:absolute;left:2325px;top:1768px;" width="28" height="28" viewBox="0 0 28 28"><rect x="2.5" y="2.5" width="22" height="22" rx="3" fill="none" stroke="#3c3c3c" stroke-width="2"/><path d="M10 7.5 L18.5 15 L14.8 15.3 L16.8 19.8 L15 20.6 L13 16.2 L10 18.8 Z" fill="#3c3c3c"/></svg>
<svg style="position:absolute;left:2379px;top:1770px;" width="28" height="26" viewBox="0 0 28 26"><g fill="none" stroke="#4a4a4a" stroke-width="1.7"><rect x="2.9" y="2.8" width="4.6" height="7.6" rx="1.6"/><rect x="11.2" y="2.8" width="4.6" height="7.6" rx="1.6"/><rect x="19.5" y="2.8" width="4.6" height="7.6" rx="1.6"/><rect x="2.9" y="13.8" width="4.6" height="7.6" rx="1.6"/><rect x="11.2" y="13.8" width="4.6" height="7.6" rx="1.6"/><rect x="19.5" y="13.8" width="4.6" height="7.6" rx="1.6"/></g></svg>
<svg style="position:absolute;left:2460px;top:1768px;" width="30" height="28" viewBox="0 0 30 28"><rect x="2.5" y="2" width="24" height="10" rx="5" fill="none" stroke="#3c3c3c" stroke-width="2"/><circle cx="8" cy="7" r="2.6" fill="#3c3c3c"/><rect x="2" y="15" width="25" height="11" rx="5.5" fill="#3c3c3c"/><circle cx="21.5" cy="20.5" r="3" fill="#fff"/></svg>
<svg style="position:absolute;left:2545px;top:1769px;" width="18" height="28" viewBox="0 0 18 28"><rect x="2" y="2" width="14" height="23" rx="3" fill="#d2d2d2" stroke="#3c3c3c" stroke-width="1.9"/><line x1="6.5" y1="5" x2="11.5" y2="5" stroke="#3c3c3c" stroke-width="1.2"/><line x1="6.5" y1="22" x2="11.5" y2="22" stroke="#3c3c3c" stroke-width="1.2"/></svg>
<svg style="position:absolute;left:2808.7px;top:1767px;" width="30" height="30" viewBox="0 0 30 30"><circle cx="11.5" cy="11.5" r="8.8" fill="none" stroke="#3c3c3c" stroke-width="2"/><line x1="18" y1="18" x2="24" y2="24" stroke="#3c3c3c" stroke-width="2.6" stroke-linecap="round"/><path d="M7.5 11.5H15.5" stroke="#3c3c3c" stroke-width="2"/></svg>
<svg style="position:absolute;left:2857px;top:1767px;" width="30" height="30" viewBox="0 0 30 30"><circle cx="11.5" cy="11.5" r="8.8" fill="none" stroke="#3c3c3c" stroke-width="2"/><line x1="18" y1="18" x2="24" y2="24" stroke="#3c3c3c" stroke-width="2.6" stroke-linecap="round"/><path d="M10.5 8.5 L12.3 7 V16" fill="none" stroke="#3c3c3c" stroke-width="1.7"/></svg>
<svg style="position:absolute;left:2904.5px;top:1767px;" width="30" height="30" viewBox="0 0 30 30"><circle cx="11.5" cy="11.5" r="8.8" fill="none" stroke="#3c3c3c" stroke-width="2"/><line x1="18" y1="18" x2="24" y2="24" stroke="#3c3c3c" stroke-width="2.6" stroke-linecap="round"/><rect x="8.3" y="8.3" width="6.4" height="6.4" rx="1" fill="none" stroke="#3c3c3c" stroke-width="1.8"/></svg>
<svg style="position:absolute;left:2952.8px;top:1767px;" width="30" height="30" viewBox="0 0 30 30"><circle cx="11.5" cy="11.5" r="8.8" fill="none" stroke="#3c3c3c" stroke-width="2"/><line x1="18" y1="18" x2="24" y2="24" stroke="#3c3c3c" stroke-width="2.6" stroke-linecap="round"/><path d="M7.5 11.5H15.5M11.5 7.5V15.5" stroke="#3c3c3c" stroke-width="2"/></svg>
<div style="position:absolute;left:486px;top:1832px;width:2538px;height:2px;background:#dedede;"></div>
<div style="position:absolute;left:486px;top:1834px;width:2538px;height:54px;background:#ffffff;"></div>
<svg style="position:absolute;left:507px;top:1851px;" width="34" height="21" viewBox="0 0 34 21"><path d="M2 4 Q2 1.5 4.5 1.5 H24 Q26 1.5 27.5 3 L31.5 8 Q32.5 10 31.5 12 L27.5 17 Q26 18.5 24 18.5 H4.5 Q2 18.5 2 16 Z" fill="#3478f6"/></svg>
<div style="position:absolute;left:554px;top:1850px;width:2px;height:22px;background:#e0e0e0;"></div>
<svg style="position:absolute;left:574px;top:1846px;" width="24" height="30" viewBox="0 0 24 30"><rect x="3.5" y="2.5" width="4.5" height="25" rx="1.5" fill="none" stroke="#707070" stroke-width="1.8"/><rect x="15" y="2.5" width="4.5" height="25" rx="1.5" fill="none" stroke="#707070" stroke-width="1.8"/></svg>
<svg style="position:absolute;left:630px;top:1846px;" width="32" height="30" viewBox="0 0 32 30"><path d="M3 16 L14 6 L25 16 M20 16 L25 16 L25 11" fill="none" stroke="#b5b5b5" stroke-width="1.8" stroke-linejoin="round"/><rect x="5.5" y="20.5" width="17" height="5.5" fill="none" stroke="#b5b5b5" stroke-width="1.8"/></svg>
<svg style="position:absolute;left:694px;top:1846px;" width="24" height="30" viewBox="0 0 24 30"><path d="M11 2 V17 M5 11 L11 17 L17 11" fill="none" stroke="#b5b5b5" stroke-width="1.8"/><rect x="2.5" y="21" width="17" height="5.5" fill="none" stroke="#b5b5b5" stroke-width="1.8"/></svg>
<svg style="position:absolute;left:755px;top:1846px;" width="24" height="30" viewBox="0 0 24 30"><path d="M11 19 V3 M5 9 L11 3 L17 9" fill="none" stroke="#b5b5b5" stroke-width="1.8"/><rect x="2.5" y="21" width="17" height="5.5" fill="none" stroke="#b5b5b5" stroke-width="1.8"/></svg>
<div style="position:absolute;left:796px;top:1850px;width:2px;height:22px;background:#e0e0e0;"></div>
<svg style="position:absolute;left:815px;top:1846px;" width="28" height="30" viewBox="0 0 28 30"><g fill="none" stroke="#707070" stroke-width="1.9" stroke-linejoin="round"><path d="M10.7 13.8 L23.6 7.8 V22.7 L10.7 28 Z"/><path d="M6.6 25.5 V11.5 L19.2 5.5"/><path d="M2.6 22.5 V9.2 L15.2 3.2"/></g></svg>
<svg style="position:absolute;left:872px;top:1846px;" width="32" height="30" viewBox="0 0 32 30"><g fill="none" stroke="#707070" stroke-width="1.8"><circle cx="6" cy="5.5" r="4"/><circle cx="6" cy="24.5" r="4"/><circle cx="25" cy="15" r="4"/><path d="M9 8 L21.5 13.5 M9 22 L21.5 16.5"/></g></svg>
<svg style="position:absolute;left:935px;top:1846px;" width="28" height="30" viewBox="0 0 28 30"><rect x="2.5" y="2" width="22" height="11" rx="5.5" fill="none" stroke="#707070" stroke-width="1.8"/><circle cx="8" cy="7.5" r="2.6" fill="#707070"/><rect x="2.5" y="16.5" width="22" height="11" rx="5.5" fill="none" stroke="#707070" stroke-width="1.8"/><circle cx="19" cy="22" r="2.6" fill="#707070"/></svg>
<svg style="position:absolute;left:993px;top:1846px;" width="30" height="30" viewBox="0 0 30 30"><path d="M27 3 L3 13.5 L14.5 15.5 L16.5 27 Z" fill="none" stroke="#707070" stroke-width="1.8" stroke-linejoin="round"/></svg>
<div style="position:absolute;left:1038px;top:1850px;width:2px;height:22px;background:#e0e0e0;"></div>
<svg style="position:absolute;left:1057px;top:1849px;" width="25" height="25" viewBox="0 0 30 30"><rect x="0.3" y="0.3" width="29.4" height="29.4" rx="7" fill="#757575"/><path d="M12.6 7.6 L14.6 10.8 M17.2 7.6 L10.9 18.1 M16.9 12.8 L22 22 M6.2 18.1 H16.2 M20.5 18.1 H24 M9.5 20.6 L8 22.3" stroke="#ffffff" stroke-width="2" stroke-linecap="round" fill="none"/></svg>
<div class="t" style="left:1094.5px;top:1849.9px;font:normal 400 22.5px/1 'Liberation Sans', sans-serif;color:#262626;">GuessingGame</div>
<div class="t" style="left:2760.5px;top:1850.1px;font:normal 400 22px/1 'Liberation Sans', sans-serif;color:#747474;-webkit-text-stroke:0.55px #747474;letter-spacing:0.95px">Line: 91&nbsp;&nbsp;Col: 46</div>
<div style="position:absolute;left:2954px;top:1850px;width:2px;height:22px;background:#e0e0e0;"></div>
<svg style="position:absolute;left:2971px;top:1847px;" width="30" height="30" viewBox="0 0 30 30"><rect x="2.5" y="2.5" width="25" height="25" rx="3.5" fill="none" stroke="#6e6e6e" stroke-width="2"/><rect x="6" y="18" width="18" height="6" rx="1" fill="#6e6e6e"/></svg>
</body></html>
